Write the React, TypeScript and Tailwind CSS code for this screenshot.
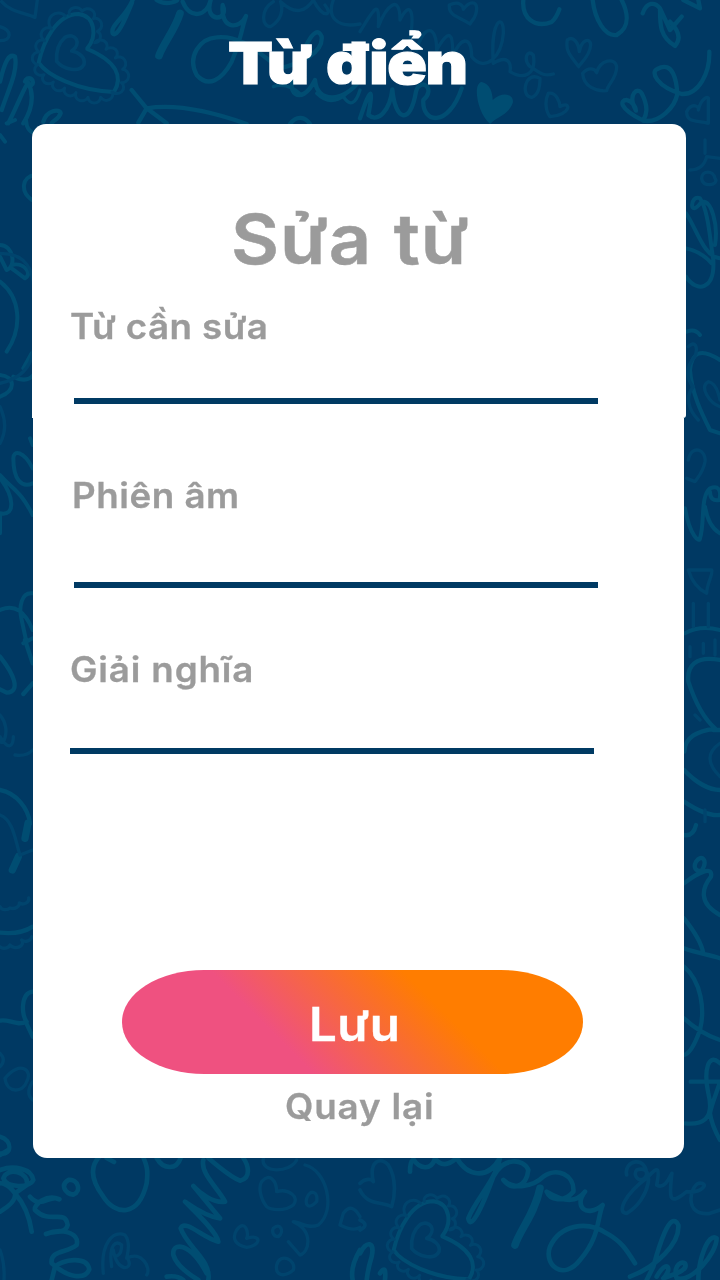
import React from 'react';

const LacyHeart = () => (
  <g>
    <path className="stroke-[#004d72]" strokeWidth="12" d="M262 145C292 108 286 48 235 42C170 42 130 125 116 188C140 225 230 272 342 276C370 230 350 184 262 147Z" />
    <path className="stroke-[#00446d]" strokeWidth="11" d="M215 153C248 130 225 95 195 112C174 130 168 158 170 184C190 208 238 220 252 193C257 173 237 157 215 153Z" />
    <path
      className="stroke-[#00446d]"
      strokeWidth="9"
      d="M208 42a19 15 0 1 1 38-8a18 16 0 0 1 34 22a19 20 0 0 1 12 38a17 18 0 0 1-8 34a20 18 0 0 1 34 20a20 18 0 0 1 28 26a18 18 0 0 1 22 34a18 18 0 0 1-4 40a20 18 0 0 1-28 28a18 16 0 0 1-34 16a18 16 0 0 1-38 0a18 16 0 0 1-36-14a18 16 0 0 1-34-14a18 16 0 0 1-34-18a18 16 0 0 1-28-22a18 16 0 0 1-18-30a18 18 0 0 1 4-38a18 18 0 0 1 16-34a18 18 0 0 1 20-36a18 18 0 0 1 42-38"
    />
  </g>
);

const Wallpaper = () => (
  <svg className="absolute inset-0 h-full w-full blur-[0.6px]" viewBox="0 0 720 1280" fill="none" strokeLinecap="round" strokeLinejoin="round" aria-hidden="true">
    <g transform="scale(.33333)">
      <LacyHeart />
      <path className="stroke-[#00446d]" strokeWidth="10" d="M5 5C30 35 70 38 105 52L112 0M0 80C38 92 35 122 0 122M820 5C780 30 785 80 812 80C845 60 850 30 842 5C890 50 920 30 940 0C970 60 1000 45 975 15M1000 0C980 50 1010 85 1080 72" />
      <path className="stroke-[#004d72]" strokeWidth="13" d="M0 245C15 180 28 160 45 170C55 215 22 275 5 330M25 370C60 300 75 255 85 248C105 290 95 330 70 370M75 245a12 12 0 1 1 18 12M130 365C140 330 180 325 182 340C175 360 160 360 155 370M395 270L440 325L500 370M415 368L440 325C530 310 650 340 740 372" />
      <path className="stroke-[#004d72]" strokeWidth="13" d="M398 0C375 55 330 75 338 100C350 116 375 60 396 8M470 0C500 20 540 0 530 0M548 5C570 60 620 50 632 0C610 70 690 65 668 15C660 90 720 90 738 48C720 100 725 120 695 185C665 240 625 265 590 225C560 170 600 115 650 112C725 105 770 155 840 205C900 190 970 160 965 110C945 60 900 165 890 225C850 265 900 330 945 240C950 310 1030 310 1080 240M870 372C890 345 915 350 930 372" />
      <path className="stroke-[#004d72]" strokeWidth="23" d="M540 40C525 90 490 130 477 167" />
      <path className="stroke-[#004d72]" strokeWidth="10" d="M820 260Q860 245 905 285M950 280Q990 320 1035 285M1030 290Q1060 335 1080 270" />
    </g>
    <g transform="translate(360 0) scale(.33333)">
      <path className="stroke-[#004d72]" strokeWidth="13" d="M490 0C485 55 525 85 575 66Q590 52 598 28M698 0C705 60 735 110 770 105C815 80 800 30 785 0M848 40C860 5 885 5 900 25L930 90L965 50M900 30C900 75 900 110 945 138C970 110 945 80 930 65M970 0L1020 25L1015 0M1048 155C1050 220 1015 285 965 282C890 260 870 215 892 207C940 180 950 245 952 282C945 320 900 370 850 362C775 325 780 300 800 300C820 305 828 325 828 332C800 280 835 260 845 280C868 325 858 345 850 362M0 355C35 250 40 265 25 345C55 370 90 330 97 268C105 360 150 380 168 275C180 230 230 265 190 300C185 370 265 385 305 265" />
      <path className="fill-[#004d72]" d="M390 372C350 335 338 250 365 246C390 250 398 280 398 300C430 270 465 285 458 310C445 345 410 350 390 372Z" />
      <path className="stroke-[#00446d]" strokeWidth="10" d="M268 15C300 0 310 20 310 28C330 0 350 5 350 25C350 55 335 60 330 72C300 50 265 50 268 15M622 120C640 105 656 130 658 155C665 120 690 110 692 135C690 170 660 190 656 200C635 170 615 155 622 120M668 220C685 200 705 205 710 218C720 180 765 170 770 200C770 235 745 250 740 272C710 275 670 260 668 220M565 280C590 275 600 310 600 320C635 300 635 345 570 350C555 330 555 300 565 280M980 335C995 305 1020 320 1015 330C1025 290 1050 285 1045 300L1045 370C1010 360 980 370 980 335M0 95C40 30 60-10 55 80C80 15 120-20 120 60C150 0 165 30 150 120M170 150C190 75 230 70 230 150C270 80 280 100 278 170C305 105 335 110 335 170C375 220 425 170 430 100C432 35 390 60 400 190C440 165 455 185 450 215C490 240 530 225 520 165C500 145 490 180 510 200C545 220 550 230 580 222M540 235C495 210 480 290 515 292Q540 285 540 235" />
    </g>
    <g transform="translate(0 1150) scale(.33333)">
      <path className="stroke-[#004d72]" strokeWidth="14" d="M0 15L25 0M0 60C40 45 95 55 100 90C90 115 20 115 10 85C20 50 90 65 80 105L45 130C20 95 0 100 0 100M0 185Q50 155 45 130Q85 175 95 245M90 140C125 180 150 130 178 148C140 130 100 165 105 180C150 225 195 175 203 225C195 255 165 240 138 252C180 235 240 245 230 285C200 310 150 300 155 340C205 385 255 390 268 358C260 315 185 330 165 350L155 390M205 90C235 85 245 125 220 134C195 130 180 105 205 90M298 20C265 55 280 100 310 140C345 195 415 205 440 100C445 60 440 45 430 22M320 24L342 36M470 24C490 60 530 60 542 24M610 30C600 70 655 115 675 155C640 160 600 130 580 108L660 205C615 200 570 165 555 155C590 190 650 245 655 275C610 265 555 205 542 235C560 290 635 330 625 390M625 24C655 50 690 80 720 92C755 85 745 45 730 24M620 370C570 275 515 275 520 315C530 350 570 375 595 390M500 380Q530 375 550 390M1080 300Q1050 350 1058 390" />
      <path className="stroke-[#00446d]" strokeWidth="10" d="M790 25C780 70 870 70 890 30M915 45C980 60 1010 180 955 225C920 240 890 210 880 215C945 245 925 310 900 315L865 275M920 145C930 115 955 125 950 155C925 180 915 165 920 145M785 95C810 65 830 95 830 125C865 115 900 140 880 165C855 185 810 180 800 170C780 145 775 110 785 95M710 240C735 205 748 250 740 265C790 250 780 290 740 292C705 285 695 265 710 240M820 235C840 215 855 245 835 260C820 260 815 245 820 235M830 345C840 305 890 330 880 360C850 385 825 375 830 345M310 370C300 280 340 240 375 255C395 280 380 320 380 325C425 300 455 355 440 375M335 350C325 280 350 270 365 285C365 320 340 330 340 300C350 370 400 360 385 330M1080 200Q1055 155 1030 190L1020 225Q1060 245 1080 232M0 300Q15 340 12 390" />
    </g>
    <g transform="translate(360 1150) scale(.33333)">
      <g transform="translate(-15 112)"><LacyHeart /></g>
      <path className="stroke-[#004d72]" strokeWidth="14" d="M150 65Q150 35 160 28C180 60 215 60 225 25Q250 60 290 24C320 75 380 95 420 24C405 95 345 150 325 205C330 240 360 190 400 80C430 20 490 25 505 60C500 110 455 125 430 90C460 120 520 110 550 80C590 50 645 75 640 125C610 160 570 150 560 125C620 160 650 155 675 125C640 170 680 205 728 165C710 210 720 260 660 330C610 395 550 345 570 290C600 225 680 210 740 250C785 275 800 300 825 340M0 310C20 270 45 275 35 320Q25 350 20 390M60 370Q80 340 75 390M810 380C890 350 960 280 955 225C930 175 895 295 880 350L860 390M890 380C920 325 940 355 910 385C950 370 985 360 975 340C955 330 940 360 950 385C995 400 1070 310 1070 265C1045 245 1015 330 1015 390" />
      <path className="stroke-[#004d72]" strokeWidth="23" d="M540 115C525 190 480 240 465 285" />
      <path className="stroke-[#00446d]" strokeWidth="11" d="M0 100C15 85 35 85 40 95C25 30 65 20 85 45C110 85 105 140 95 170C65 155 20 165 0 120M0 210Q30 225 0 240M800 75C790 30 860 15 860 75C845 105 815 80 830 60C890 40 870 150 800 190C770 190 790 135 865 80C895 45 900 55 890 105C920 125 940 50 935 75C930 130 920 175 980 125C1030 130 1050 95 1015 100C990 110 970 200 1050 190L1080 180" />
    </g>
    <g transform="translate(0 120) scale(.33333)">
      <path className="stroke-[#004d72]" strokeWidth="12" d="M20 10L45 0M78 0Q80 35 105 40M0 45L15 65M105 165C65 170 60 215 96 240M0 375C40 375 50 440 20 450L0 410M35 435C70 425 100 460 75 475L35 445M0 485C60 530 70 620 20 695M0 830C50 810 45 770 0 765M40 770Q80 790 100 765M95 700L70 745M90 955L98 975M98 1045C70 990 40 990 40 1015C40 1080 65 1105 98 1090M0 1065C40 1110 60 1110 98 1185M0 1075C40 1125 50 1190 0 1180V1240M0 1470C45 1450 75 1475 98 1530M98 1420C65 1415 55 1460 65 1500L78 1560M98 1555L70 1570" />
      <path className="stroke-[#00446d]" strokeWidth="10" d="M0 860Q28 920 0 970M0 400Q110 400 100 530M0 790Q90 770 100 690" />
    </g>
    <g transform="translate(660 120) scale(.33333)">
      <path className="stroke-[#004d72]" strokeWidth="12" d="M78 280C110 325 130 410 180 415M165 375C175 315 155 240 125 245C85 300 90 220 120 235C145 270 150 360 160 420C165 510 110 520 78 470M78 385Q125 395 155 430M180 720C120 680 95 700 90 750C95 820 125 880 150 930L180 940M80 635Q105 625 120 645M75 1165C90 1250 120 1270 120 1255C135 1210 120 1130 150 1105C175 1095 185 1110 178 1140Q150 1145 150 1115M135 1160Q145 1220 180 1240M75 1540Q120 1515 180 1530" />
      <path className="stroke-[#00446d]" strokeWidth="10" d="M135 60V100M90 150Q130 150 140 110L180 115M125 175C125 150 160 150 165 175C180 195 125 205 125 175M85 680C105 660 115 680 105 710C75 740 80 780 100 800C75 830 85 870 115 900M180 860C150 850 115 800 145 785Q170 790 180 840M85 1020C95 970 140 990 135 1025C130 1055 115 1070 105 1085L80 1075M85 1350H155C160 1365 140 1390 140 1420Q100 1400 85 1350M100 1450V1520M145 1450V1520" />
    </g>
    <g transform="translate(0 640) scale(.33333)">
      <path className="stroke-[#004d72]" strokeWidth="13" d="M0 50C40 100 65 155 20 158L0 148M75 0L98 70M70 162L98 130M0 450C50 460 85 505 90 550M0 878Q60 885 98 860M98 1055C60 1060 65 1130 80 1145C50 1160 25 1135 0 1142M78 1148L98 1190M0 1490C40 1500 35 1550 0 1540" />
      <path className="stroke-[#004d72]" strokeWidth="22" d="M84 550L75 595M55 650L37 690" />
      <path className="stroke-[#00446d]" strokeWidth="10" d="M0 225C40 270 0 340 0 290C30 340 40 310 40 290M45 345Q80 350 98 330M0 525C40 540 45 600 60 645L98 630M0 800a18 15 0 0 0 30 4a20 15 0 0 0 28-15a18 15 0 0 0 28-15M0 920a18 15 0 0 0 30-5a20 15 0 0 0 35-15a18 15 0 0 0 30-10M15 1315C60 1260 100 1290 80 1325C70 1360 20 1360 15 1315M98 1325Q75 1360 98 1380M0 1240Q20 1260 0 1280" />
    </g>
    <g transform="translate(660 640) scale(.33333)">
      <path className="stroke-[#004d72]" strokeWidth="13" d="M180 60C105 45 80 80 85 125C105 185 130 235 165 265C110 275 75 290 73 335M72 390C110 430 150 450 180 450M180 270H160M72 485Q140 530 180 525M72 585Q100 590 108 555M72 730C110 700 160 675 153 710C125 745 115 790 180 825M108 665C125 640 145 660 125 692C105 695 100 680 108 665M72 835C100 870 125 910 130 940M72 925C110 940 155 945 180 955M72 980C125 1025 135 1110 120 1170Q95 1240 72 1245M72 1135Q120 1180 180 1200M92 1325H180M180 1270C145 1235 130 1290 145 1360C165 1440 125 1455 75 1450M180 1325C170 1360 155 1390 150 1420Q155 1455 180 1500" />
      <path className="stroke-[#00446d]" strokeWidth="10" d="M180 310Q120 350 180 410M90 20V50M130 10V40M165 0V45M105 225L120 240M135 545V510" />
    </g>
  </svg>
);

type FieldProps = { label: string; labelClass: string; lineClass: string };

const Field = ({ label, labelClass, lineClass }: FieldProps) => (
  <label className="flex flex-col items-start">
    <span className={`block origin-left scale-x-[1.05] whitespace-nowrap text-[35px] font-semibold leading-[44px] text-[#9b9b9b] [-webkit-text-stroke:0.3px_#9b9b9b] ${labelClass}`}>{label}</span>
    <span className={`block h-[6px] w-[524px] bg-[#003a63] ${lineClass}`} />
  </label>
);

export default function App() {
  return (
    <main className="relative h-[1280px] w-[720px] overflow-hidden bg-[#003963] font-['Inter','Noto_Sans',sans-serif]">
      <Wallpaper />
      <div className="relative flex flex-col">
        <header className="flex h-[124px] items-start pl-[228px] pt-[28px]">
          <h1 className="origin-left scale-x-[1.13] whitespace-nowrap text-[58px] font-black leading-[70px] tracking-[-1.2px] text-white [-webkit-text-stroke:1.2px_white] [word-spacing:3px]">Từ điển</h1>
        </header>
        <section className="ml-[32px] h-[294px] w-[654px] rounded-t-[14px] rounded-br-[3px] bg-white pt-[73px]">
          <h2 className="ml-[199px] origin-left scale-x-[1.07] whitespace-nowrap text-[69px] font-semibold leading-[84px] tracking-[0.9px] text-[#9b9b9b] [-webkit-text-stroke:0.5px_#9b9b9b] [word-spacing:2px]">Sửa từ</h2>
          <div className="mt-[23px]">
            <Field label="Từ cần sửa" labelClass="ml-[38px] tracking-[0.4px]" lineClass="ml-[42px] mt-[50px]" />
          </div>
        </section>
        <section className="ml-[33px] flex h-[740px] w-[651px] flex-col rounded-b-[14px] bg-white pt-[55px]">
          <Field label="Phiên âm" labelClass="ml-[39px] tracking-[0.5px]" lineClass="ml-[41px] mt-[65px]" />
          <div className="mt-[59px]">
            <Field label="Giải nghĩa" labelClass="ml-[37px] tracking-[0.8px]" lineClass="ml-[37px] mt-[57px]" />
          </div>
          <button className="ml-[89px] mt-[216px] flex h-[104px] w-[461px] items-center rounded-[82px/52px] bg-[linear-gradient(45deg,#ef5180_34%,#ff7d00_68%)] pl-[187px] pt-[4px] text-[46px] font-semibold leading-none text-white">
            <span className="origin-left scale-x-[1.07] tracking-[0.5px] [-webkit-text-stroke:0.4px_white]">Lưu</span>
          </button>
          <button className="ml-[252px] mt-[10px] origin-left scale-x-[1.05] self-start whitespace-nowrap text-[35px] font-semibold leading-[44px] tracking-[0.8px] text-[#9b9b9b] [-webkit-text-stroke:0.3px_#9b9b9b]">Quay lại</button>
        </section>
      </div>
    </main>
  );
}
